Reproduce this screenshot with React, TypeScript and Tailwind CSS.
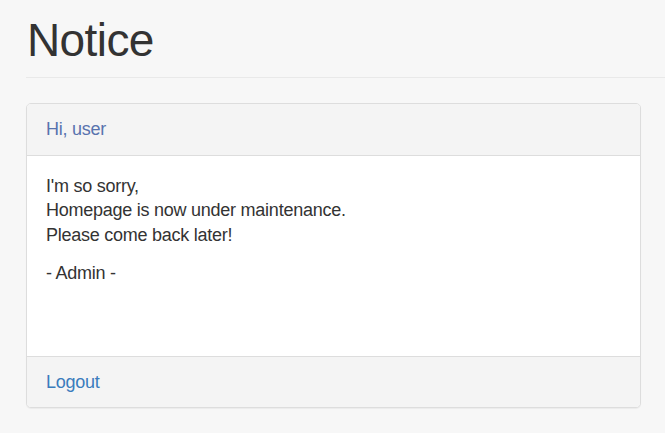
export default function App() {
  return (
    <div
      className="min-h-[433px] w-full bg-[#f7f7f7] text-[#333]"
      style={{ fontFamily: '"Liberation Sans", Arial, sans-serif' }}
    >
      <div className="pl-[26px]">
        <div className="border-b border-[#e9e9e9] pb-[12px] pt-[15px]">
          <h1 className="text-[46px] leading-[50px] font-normal tracking-[-0.6px] text-[#333] pl-[1px]">Notice</h1>
        </div>
      </div>
      <div className="pl-[26px] pr-[24px] pt-[25px]">
        <div className="rounded-[5px] border border-[#dddddd] bg-white shadow-[0_1px_1px_rgba(0,0,0,0.05)] overflow-hidden">
          <div className="h-[52px] flex items-center px-[19px] bg-[#f4f4f4] border-b border-[#dddddd] text-[18px] tracking-[-0.25px] text-[#5873ae]">
            Hi, user
          </div>
          <div className="h-[200px] px-[19px] pt-[18px] text-[18px] leading-[24.4px] tracking-[-0.25px]">
            <p className="mb-[14px]">
              I'm so sorry,
              <br />
              Homepage is now under maintenance.
              <br />
              Please come back later!
            </p>
            <p>- Admin -</p>
          </div>
          <div className="h-[51px] flex items-center px-[19px] bg-[#f4f4f4] border-t border-[#dddddd] text-[18px] tracking-[-0.25px]">
            <a href="#" className="text-[#3a7cbd]">Logout</a>
          </div>
        </div>
      </div>
    </div>
  );
}
